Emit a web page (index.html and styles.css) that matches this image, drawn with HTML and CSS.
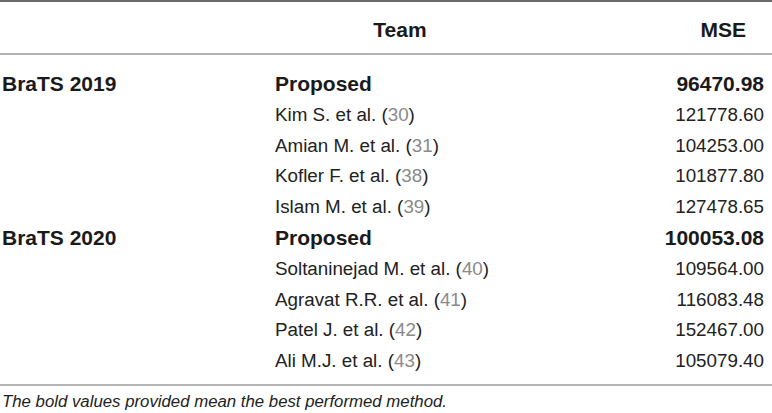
FILE: index.html
```html
<!DOCTYPE html>
<html>
<head>
<meta charset="utf-8">
<link rel="stylesheet" href="styles.css">
</head>
<body>
<div class="table">
  <div class="head">
    <div class="c1"></div>
    <div class="c2 h">Team</div>
    <div class="c3 h">MSE</div>
  </div>
  <div class="body">
    <div class="row"><div class="c1 b">BraTS 2019</div><div class="c2 b">Proposed</div><div class="c3 num b">96470.98</div></div>
    <div class="row"><div class="c1"></div><div class="c2">Kim S. et al. (<span class="ref">30</span>)</div><div class="c3 num">121778.60</div></div>
    <div class="row"><div class="c1"></div><div class="c2">Amian M. et al. (<span class="ref">31</span>)</div><div class="c3 num">104253.00</div></div>
    <div class="row"><div class="c1"></div><div class="c2">Kofler F. et al. (<span class="ref">38</span>)</div><div class="c3 num">101877.80</div></div>
    <div class="row"><div class="c1"></div><div class="c2">Islam M. et al. (<span class="ref">39</span>)</div><div class="c3 num">127478.65</div></div>
    <div class="row"><div class="c1 b">BraTS 2020</div><div class="c2 b">Proposed</div><div class="c3 num b">100053.08</div></div>
    <div class="row"><div class="c1"></div><div class="c2">Soltaninejad M. et al. (<span class="ref">40</span>)</div><div class="c3 num">109564.00</div></div>
    <div class="row"><div class="c1"></div><div class="c2">Agravat R.R. et al. (<span class="ref">41</span>)</div><div class="c3 num">116083.48</div></div>
    <div class="row"><div class="c1"></div><div class="c2">Patel J. et al. (<span class="ref">42</span>)</div><div class="c3 num">152467.00</div></div>
    <div class="row"><div class="c1"></div><div class="c2">Ali M.J. et al. (<span class="ref">43</span>)</div><div class="c3 num">105079.40</div></div>
  </div>
  <div class="foot">The bold values provided mean the best performed method.</div>
</div>
</body>
</html>
```

FILE: styles.css
```css
html, body {
  margin: 0;
  padding: 0;
  background: #ffffff;
}
body {
  font-family: "Liberation Sans", Arial, sans-serif;
  color: #222222;
  font-size: 18.8px;
}
.table {
  width: 772px;
  border-top: 2px solid #6a6a6a;
}
.head, .row {
  display: grid;
  grid-template-columns: 273px 250px 1fr;
  padding: 0 8px 0 2px;
}
.head {
  height: 53px;
  padding-top: 4px;
  box-sizing: border-box;
  align-items: center;
  border-bottom: 2px solid #b4b4b4;
}
.h {
  font-weight: bold;
  font-size: 21px;
  color: #1a1a1a;
  text-align: center;
}
.c3.h {
  text-align: right;
  padding-right: 18px;
}
.body {
  padding: 14px 0 7px;
  border-bottom: 2px solid #b4b4b4;
}
.row {
  height: 30.8px;
  line-height: 30.8px;
}
.b {
  font-weight: bold;
  font-size: 21px;
  color: #1a1a1a;
}
.num { text-align: right; }
.ref { color: #8a8a8a; }
.foot {
  font-style: italic;
  font-size: 16.8px;
  padding: 6px 2px 0;
}
```
